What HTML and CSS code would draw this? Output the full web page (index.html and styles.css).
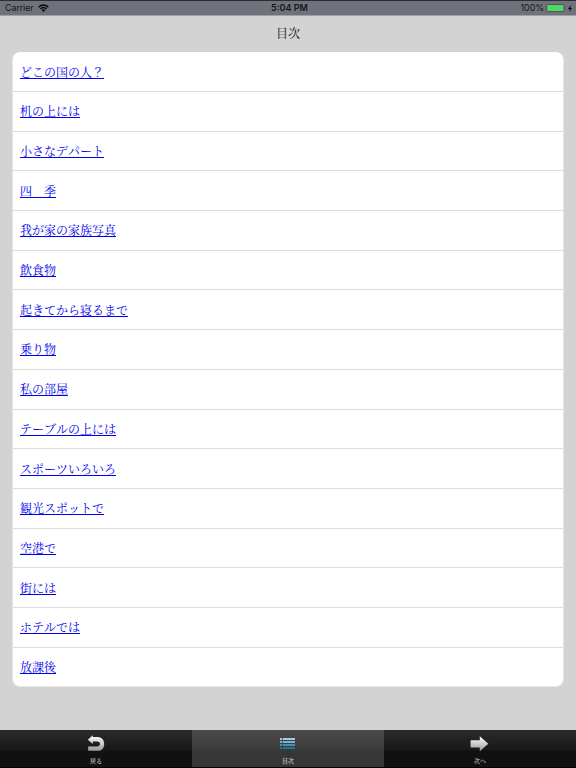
FILE: index.html
```html
<!DOCTYPE html>
<html lang="ja">
<head>
  <meta charset="UTF-8">
  <meta name="viewport" content="width=device-width, initial-scale=1.0">
  <title>目次</title>
  <link rel="stylesheet" href="styles.css">
</head>
<body>

  <!-- ステータスバー -->
  <div class="status">
    <div class="carrier">
      <span>Carrier</span>
      <svg class="wifi" width="11" height="8" viewBox="0 0 11 8">
        <path d="M0.7 3.1Q5.5 -1.2 10.3 3.1M2.5 4.9Q5.5 2.2 8.5 4.9" fill="none" stroke="#080808" stroke-width="1.5"/>
        <path d="M3.7 6Q5.5 4.6 7.3 6L5.5 7.9Z" fill="#080808"/>
      </svg>
    </div>
    <div class="time">5:04 PM</div>
    <div class="power">
      <span>100%</span>
      <svg class="battery" width="20" height="8" viewBox="0 0 20 8">
        <rect x="0.5" y="0.4" width="17.6" height="7.2" rx="1.4" fill="#70727b" stroke="#4b4d54" stroke-width="0.8"/>
        <rect x="1.2" y="1.1" width="16.2" height="5.8" rx="0.7" fill="#4bd964"/>
        <path d="M18.8 2.6Q20 4 18.8 5.4Z" fill="#44464d"/>
      </svg>
      <svg class="bolt" width="4" height="7" viewBox="0 0 4 7">
        <path d="M2.8 0L0 3.9H1.8L1.1 7L4 2.9H2.2Z" fill="#080808"/>
      </svg>
    </div>
  </div>

  <h1>目次</h1>

  <!-- 目次リスト -->
  <ul class="list">
    <li><a href="#">どこの国の人？</a></li>
    <li><a href="#">机の上には</a></li>
    <li><a href="#">小さなデパート</a></li>
    <li><a href="#">四　季</a></li>
    <li><a href="#">我が家の家族写真</a></li>
    <li><a href="#">飲食物</a></li>
    <li><a href="#">起きてから寝るまで</a></li>
    <li><a href="#">乗り物</a></li>
    <li><a href="#">私の部屋</a></li>
    <li><a href="#">テーブルの上には</a></li>
    <li><a href="#">スポーツいろいろ</a></li>
    <li><a href="#">観光スポットで</a></li>
    <li><a href="#">空港で</a></li>
    <li><a href="#">街には</a></li>
    <li><a href="#">ホテルでは</a></li>
    <li><a href="#">放課後</a></li>
  </ul>

  <!-- 下のタブ -->
  <div class="tabs">
    <div class="tab">
      <svg width="20" height="18" viewBox="0 0 20 18">
        <defs>
          <linearGradient id="gray" x1="0" y1="0" x2="0" y2="1">
            <stop offset="0" stop-color="#ffffff"/>
            <stop offset="1" stop-color="#999999"/>
          </linearGradient>
        </defs>
        <path d="M1.8 4.8L6.8 0.2V2H11.5C15.8 2 18.2 4.9 18.2 8.9S15.8 15.8 11.5 15.8H2.2V11.4H11C12.9 11.4 13.9 10.4 13.9 8.9S12.9 6.6 11 6.6H6.8V9Z" fill="url(#gray)"/>
      </svg>
      <span>戻る</span>
    </div>
    <div class="tab active">
      <svg width="20" height="18" viewBox="0 0 20 18">
        <path d="M2 3H4.3V5H2ZM5 3H17V5H5Z" fill="#a5cadb"/>
        <path d="M2 6H4.3V8H2ZM5 6H17V8H5Z" fill="#79b1d0"/>
        <path d="M2 9H4.3V11H2ZM5 9H17V11H5Z" fill="#438fb9"/>
        <path d="M2 12H4.3V14H2ZM5 12H17V14H5Z" fill="#1b739f"/>
      </svg>
      <span>目次</span>
    </div>
    <div class="tab">
      <svg width="20" height="18" viewBox="0 0 20 18">
        <path d="M0.6 5.2H9.8V1.2L18.3 8.7L9.8 16.2V12.4H0.6Z" fill="url(#gray)"/>
      </svg>
      <span>次へ</span>
    </div>
  </div>

</body>
</html>
```
FILE: styles.css
```css
* {
  box-sizing: border-box;
}

body {
  margin: 0;
  height: 768px;
  display: flex;
  flex-direction: column;
  overflow: hidden;
  background-color: #d3d3d3;
  font-family: "Noto Serif CJK JP", "Noto Sans CJK JP", serif;
  font-kerning: none;
}

/* ステータスバー */
.status {
  display: grid;
  grid-template-columns: 1fr auto 1fr;
  align-items: center;
  flex: none;
  height: 16px;
  padding: 0 4px 0 5px;
  border-top: 1px solid #2b2c34;
  border-bottom: 1px solid #a0a1a6;
  background-color: #70727b;
  color: #151519;
  font-family: Inter, "Liberation Sans", sans-serif;
  font-size: 9px;
  line-height: 14px;
}

.carrier,
.power {
  display: flex;
  align-items: center;
}

.carrier {
  gap: 4px;
  letter-spacing: -0.1px;
}

.power {
  justify-content: flex-end;
  gap: 2px;
  letter-spacing: -0.1px;
}

.time {
  padding-left: 2px;
  font-weight: 600;
}

h1 {
  flex: none;
  height: 36px;
  margin: 0;
  color: #111;
  font-size: 12px;
  font-weight: 400;
  line-height: 34px;
  text-align: center;
}

/* リスト */
.list {
  flex: none;
  height: 635px;
  margin: 0 12px;
  padding: 0;
  display: grid;
  grid-template-rows: 40px repeat(14, 39.7px) 1fr;
  border: 1px solid #e6e6e6;
  border-top: none;
  border-radius: 8px;
  background-color: #fff;
  list-style: none;
}

.list li {
  display: flex;
  align-items: center;
  padding: 0 7px;
  border-bottom: 1px solid #dcdcdc;
}

.list li:last-child {
  padding-top: 1px;
  border-bottom: none;
}

.list a {
  color: #0000ee;
  font-size: 12px;
  font-weight: 400;
  line-height: 18px;
  text-decoration: underline;
  text-decoration-thickness: 1px;
  text-decoration-skip-ink: none;
  text-underline-offset: 1px;
}

/* タブ */
.tabs {
  display: grid;
  grid-template-columns: repeat(3, 1fr);
  flex: none;
  height: 38px;
  margin-top: auto;
  border-bottom: 1px solid #000;
  background: linear-gradient(#2b2b2b, #171717 55%, #111 56%);
}

.tab {
  display: flex;
  flex-direction: column;
  align-items: center;
  padding-top: 5px;
  color: #eee;
  font-size: 6px;
  font-weight: 400;
  line-height: 8px;
}

.tab span {
  margin-top: 4px;
}

.active {
  background: linear-gradient(#4b4b4b, #3a3a3a 55%, #363636 56%);
}
```
